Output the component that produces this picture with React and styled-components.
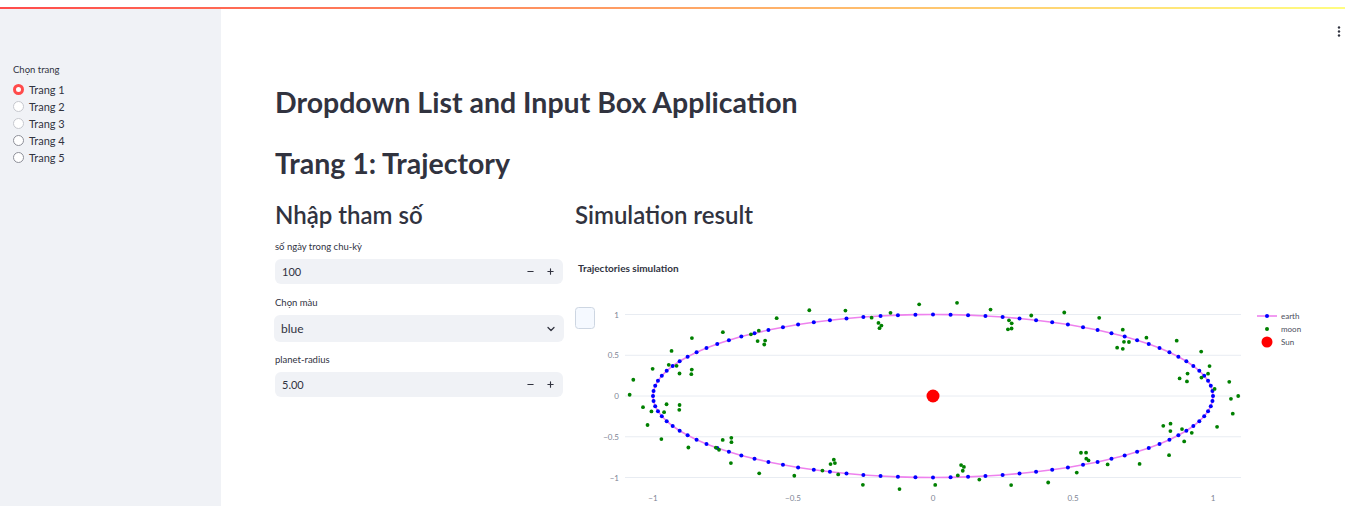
import React from 'react';
import styled, { createGlobalStyle } from 'styled-components';
import { Minus, Plus, ChevronDown } from 'lucide-react';

/** Styles */
const GlobalStyle = createGlobalStyle`
    html, body {
        margin: 0;
        padding: 0;
        height: 506px;
        overflow: hidden;
        background: #ffffff;
    }
    body {
        font-family: "Source Sans Pro", Lato, sans-serif;
        color: #31333f;
    }
`;

const Page = styled.div`
    display: flex;
    flex-direction: column;
    height: 506px;
    padding-top: 7px;
    box-sizing: border-box;
`;
const Decoration = styled.div`
    height: 2px;
    flex-shrink: 0;
    background: linear-gradient(90deg, #ff4b4b, #fffd80);
`;
const Body = styled.div`
    display: flex;
    flex: 1;
    min-height: 0;
`;
const Sidebar = styled.aside`
    width: 221px;
    flex-shrink: 0;
    background: #f0f2f6;
    padding: 53px 0 0 13px;
    box-sizing: border-box;
`;
const WidgetLabel = styled.div`
    font-size: 9.5px;
    line-height: 16px;
    color: #31333f;
`;
const RadioList = styled.div`
    display: flex;
    flex-direction: column;
    margin-top: 3px;
`;
const RadioRow = styled.label`
    display: flex;
    align-items: center;
    gap: 5px;
    height: 17px;
    font-size: 11px;
    color: #31333f;
`;
const RadioDot = styled.span`
    width: 11px;
    height: 11px;
    box-sizing: border-box;
    border-radius: 50%;
    background: #ffffff;
    border: ${({ $on, $faded }) => ($on ? '3.5px solid #ff4b4b' : $faded ? '1px solid #c6c8ce' : '1px solid #8e9099')};
`;

const Main = styled.main`
    flex: 1;
    display: flex;
    flex-direction: column;
    padding: 0 40px 0 54px;
    min-width: 0;
`;
const Toolbar = styled.div`
    display: flex;
    justify-content: flex-end;
    height: 18px;
    padding-top: 17px;
    margin-right: -36px;
`;
const Title = styled.h1`
    margin: 0;
    font-size: 28.5px;
    line-height: 34px;
    font-weight: 700;
    color: #31333f;
    margin-top: ${({ $top }) => $top}px;
`;
const Columns = styled.div`
    display: flex;
    gap: 12px;
    margin-top: 20px;
`;
const LeftCol = styled.div`
    width: 288px;
    flex-shrink: 0;
    display: flex;
    flex-direction: column;
`;
const RightCol = styled.div`
    flex: 1;
    display: flex;
    flex-direction: column;
`;
const SubHeader = styled.h2`
    margin: 0;
    font-size: 24px;
    line-height: 30px;
    font-weight: 600;
    color: #31333f;
`;
const Field = styled.div`
    display: flex;
    flex-direction: column;
    gap: 4px;
    margin-top: ${({ $top }) => $top}px;
`;
const InputBox = styled.div`
    display: flex;
    align-items: center;
    height: ${({ $h }) => $h || 25}px;
    background: #f0f2f6;
    border-radius: 6px;
    padding: 0 3px 0 7px;
    font-size: ${({ $fs }) => $fs || 11}px;
    color: #31333f;
    margin: ${({ $wide }) => ($wide ? '0 -1px' : '0')};
`;
const InputValue = styled.span`
    flex: 1;
`;
const StepButton = styled.span`
    width: 20px;
    display: flex;
    justify-content: center;
    color: #31333f;
`;
const ChartTitle = styled.div`
    font-size: 10px;
    font-weight: 700;
    color: #31333f;
    margin: 30px 0 0 3px;
    line-height: 16px;
`;
const ChartSvg = styled.svg`
    display: block;
    margin-top: 14px;
    overflow: visible;
`;

/** Data */
const X = (v) => 358 + 280 * v;
const Y = (v) => 106 - 81.5 * v;
const N = 100;
const earth = Array.from({ length: N }, (_, i) => {
    const t = (2 * Math.PI * i) / N;
    return [Math.cos(t), Math.sin(t)];
});
const moon = earth.map(([x, y], i) => {
    const t = (2 * Math.PI * i) / N;
    const k = 13.37 * t;
    return [x + 0.09 * Math.cos(k), y + 0.15 * Math.sin(k)];
});
const yTicks = [[1, '1'], [0.5, '0.5'], [0, '0'], [-0.5, '−0.5'], [-1, '−1']];
const xTicks = [[-1, '−1'], [-0.5, '−0.5'], [0, '0'], [0.5, '0.5'], [1, '1']];

const Chart = () => (
    <ChartSvg width="730" height="216" viewBox="0 0 730 216" fontFamily='"Source Sans Pro", Lato, sans-serif'>
        <rect x="0.5" y="17.5" width="19" height="21" rx="3" fill="#f5f9ff" stroke="#cdd6e2" />
        {yTicks.map(([v, l]) => (
            <g key={l}>
                <line x1="50" x2="666" y1={Y(v)} y2={Y(v)} stroke="#e8ecf2" strokeWidth="1" />
                <text x="44" y={Y(v) + 3} fontSize="8" fill="#7d8494" textAnchor="end">{l}</text>
            </g>
        ))}
        {xTicks.map(([v, l]) => (
            <text key={l} x={X(v)} y="211" fontSize="8" fill="#7d8494" textAnchor="middle">{l}</text>
        ))}
        <polyline
            points={[...earth, earth[0]].map(([x, y]) => `${X(x)},${Y(y)}`).join(' ')}
            fill="none"
            stroke="#ee82ee"
            strokeWidth="1.6"
        />
        {earth.map(([x, y], i) => (
            <circle key={`e${i}`} cx={X(x)} cy={Y(y)} r="2" fill="#0000ff" />
        ))}
        {moon.map(([x, y], i) => (
            <circle key={`m${i}`} cx={X(x)} cy={Y(y)} r="1.9" fill="#008000" />
        ))}
        <circle cx={X(0)} cy={Y(0)} r="6.5" fill="#ff0000" />

        <line x1="682" x2="702" y1="26" y2="26" stroke="#ee82ee" strokeWidth="1.6" />
        <circle cx="692" cy="26" r="2" fill="#0000ff" />
        <text x="706" y="29" fontSize="8" fill="#4a4e5c">earth</text>
        <circle cx="692" cy="39" r="2" fill="#008000" />
        <text x="706" y="42" fontSize="8" fill="#4a4e5c">moon</text>
        <circle cx="692" cy="52" r="5.5" fill="#ff0000" />
        <text x="706" y="55" fontSize="8" fill="#4a4e5c">Sun</text>
    </ChartSvg>
);

const MenuDots = () => (
    <svg width="4" height="11" viewBox="0 0 4 11">
        <circle cx="2" cy="1.5" r="1.2" fill="#31333f" />
        <circle cx="2" cy="5.5" r="1.2" fill="#31333f" />
        <circle cx="2" cy="9.5" r="1.2" fill="#31333f" />
    </svg>
);

const NumberInput = ({ value }) => (
    <InputBox>
        <InputValue>{value}</InputValue>
        <StepButton><Minus size={9} strokeWidth={3} /></StepButton>
        <StepButton><Plus size={9} strokeWidth={3} /></StepButton>
    </InputBox>
);

const pages = ['Trang 1', 'Trang 2', 'Trang 3', 'Trang 4', 'Trang 5'];

/** Render */
const App = () => {
    return (
        <Page>
            <GlobalStyle />
            <Decoration />
            <Body>
                <Sidebar>
                    <WidgetLabel>Chọn trang</WidgetLabel>
                    <RadioList>
                        {pages.map((p, i) => (
                            <RadioRow key={p}>
                                <RadioDot $on={i === 0} $faded={i === 1 || i === 2} />
                                {p}
                            </RadioRow>
                        ))}
                    </RadioList>
                </Sidebar>

                <Main>
                    <Toolbar><MenuDots /></Toolbar>
                    <Title $top={43}>Dropdown List and Input Box Application</Title>
                    <Title $top={27}>Trang 1: Trajectory</Title>

                    <Columns>
                        <LeftCol>
                            <SubHeader>Nhập tham số</SubHeader>
                            <Field $top={9}>
                                <WidgetLabel>số ngày trong chu-kỳ</WidgetLabel>
                                <NumberInput value="100" />
                            </Field>
                            <Field $top={11}>
                                <WidgetLabel>Chọn màu</WidgetLabel>
                                <InputBox $h={27} $fs={12} $wide>
                                    <InputValue>blue</InputValue>
                                    <StepButton><ChevronDown size={12} strokeWidth={2.5} /></StepButton>
                                </InputBox>
                            </Field>
                            <Field $top={10}>
                                <WidgetLabel>planet-radius</WidgetLabel>
                                <NumberInput value="5.00" />
                            </Field>
                        </LeftCol>

                        <RightCol>
                            <SubHeader>Simulation result</SubHeader>
                            <ChartTitle>Trajectories simulation</ChartTitle>
                            <Chart />
                        </RightCol>
                    </Columns>
                </Main>
            </Body>
        </Page>
    );
};

export default App;
